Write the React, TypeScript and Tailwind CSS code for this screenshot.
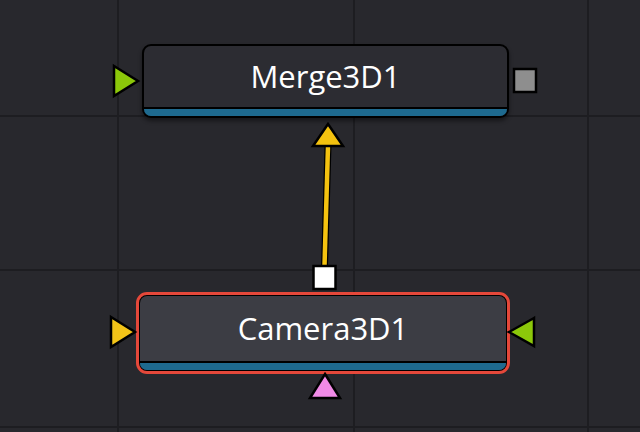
const gridX = [117, 353, 587];
const gridY = [115, 269, 426];

function Ports() {
  return (
    <svg className="absolute inset-0 pointer-events-none" width={640} height={432} viewBox="0 0 640 432">
      {/* link Camera3D1 -> Merge3D1 */}
      <line x1={324.5} y1={266} x2={328} y2={146} stroke="#000" strokeWidth={7} />
      <line x1={324.5} y1={266} x2={328} y2={146} stroke="#f4c20f" strokeWidth={4.5} />
      <polygon points="328,124 343,146 313,146" fill="#f4c20f" stroke="#000" strokeWidth={2.5} strokeLinejoin="miter" />

      {/* Merge3D1 ports */}
      <polygon points="114,66 138,81 114,96" fill="#8cc80a" stroke="#000" strokeWidth={2.5} />
      <rect x={514} y={69} width={22} height={23} fill="#8e8e8e" stroke="#000" strokeWidth={2.5} />

      {/* Camera3D1 ports */}
      <rect x={313.5} y={266} width={22} height={23} fill="#fff" stroke="#000" strokeWidth={2.5} />
      <polygon points="111,317 135,332 111,347" fill="#f2c418" stroke="#000" strokeWidth={2.5} />
      <polygon points="534,318 509,332 534,346" fill="#8cc80a" stroke="#000" strokeWidth={2.5} />
      <polygon points="325,374 340,398 310,398" fill="#f08ae6" stroke="#000" strokeWidth={2.5} />
    </svg>
  );
}

function Node({ label, selected }: { label: string; selected?: boolean }) {
  return (
    <div
      className={
        selected
          ? 'h-full rounded-[11px] border-[3px] border-[#e5483a] bg-black p-px'
          : 'h-full rounded-[9px] bg-black p-[2px] shadow-[0_3px_4px_rgba(0,0,0,0.45)]'
      }
    >
      <div
        className={
          'h-full flex flex-col rounded-[7px] overflow-hidden ' + (selected ? 'bg-[#3c3d44]' : 'bg-[#2c2c32]')
        }
      >
        <div className="flex-1 flex items-center justify-center text-[31px] font-medium text-white font-['Open_Sans',sans-serif] leading-none">
          {label}
        </div>
        <div className="h-[9px] border-t-2 border-black bg-[#1e6a8f]" />
      </div>
    </div>
  );
}

export default function App() {
  return (
    <div className="relative w-[640px] h-[432px] overflow-hidden bg-[#28282d]">
      {gridX.map((x) => (
        <div key={'x' + x} className="absolute top-0 bottom-0 w-[2px] bg-[#1d1d21]" style={{ left: x }} />
      ))}
      {gridY.map((y) => (
        <div key={'y' + y} className="absolute left-0 right-0 h-[2px] bg-[#1d1d21]" style={{ top: y }} />
      ))}

      <div className="absolute left-[142px] top-[44px] w-[367px] h-[74px]">
        <Node label="Merge3D1" />
      </div>
      <div className="absolute left-[136px] top-[292px] w-[374px] h-[82px]">
        <Node label="Camera3D1" selected />
      </div>

      <Ports />
    </div>
  );
}
